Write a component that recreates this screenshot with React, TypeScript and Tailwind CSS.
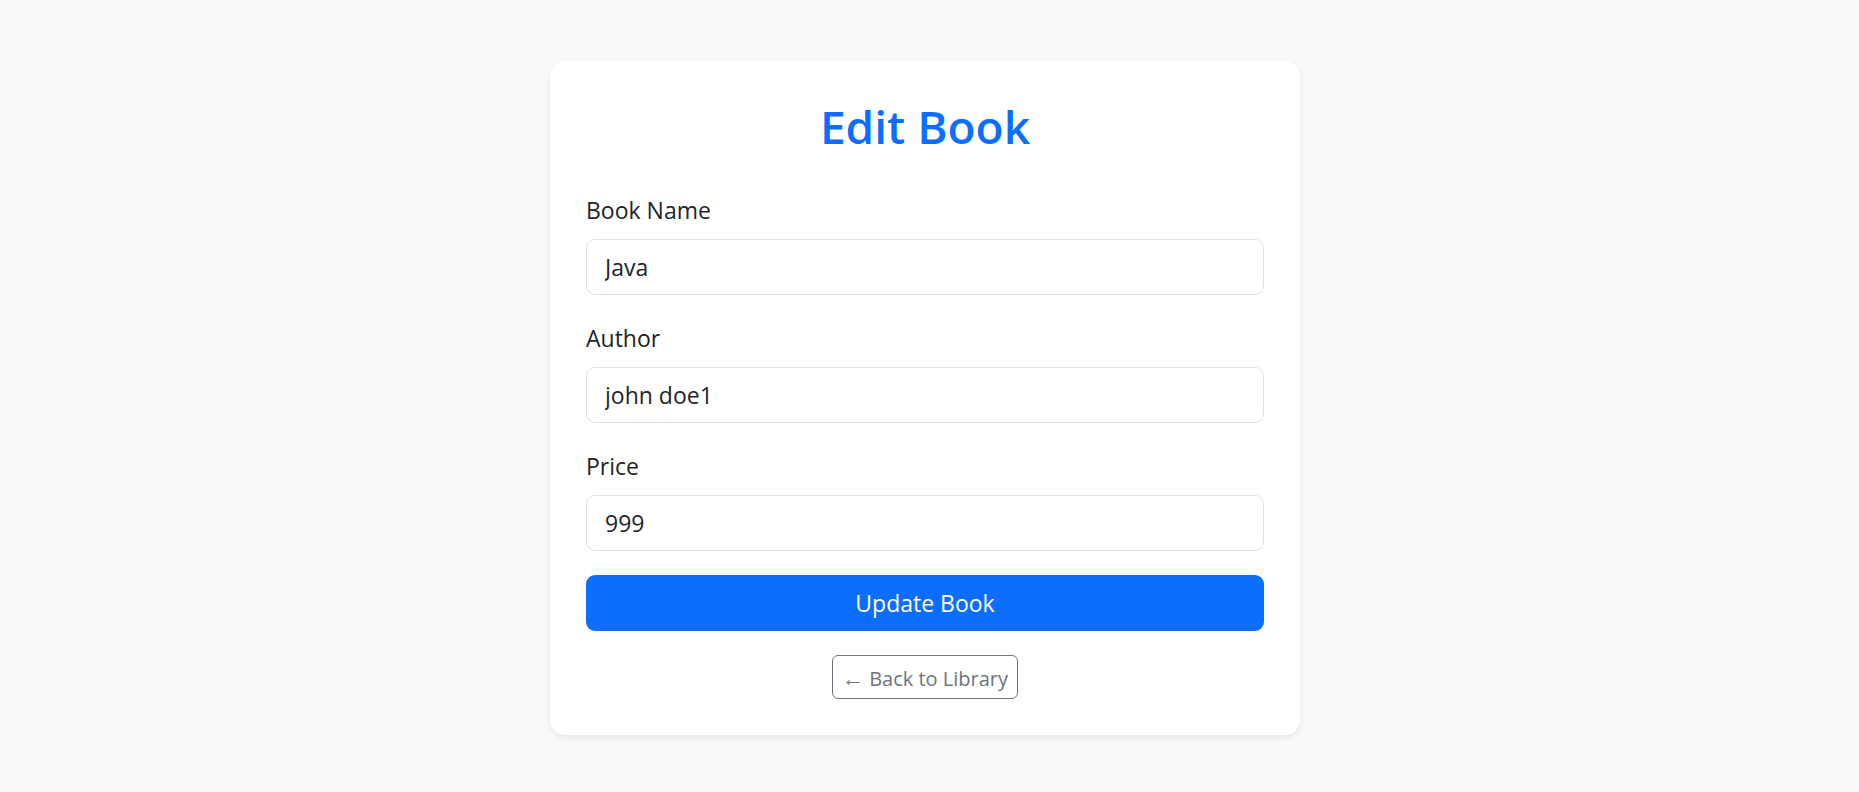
import React, { useState } from 'react';

const font = { fontFamily: '"Open Sans", "Noto Sans", "Liberation Sans", sans-serif' };

interface FieldProps {
  label: string;
  value: string;
  onChange: (v: string) => void;
}

function Field({ label, value, onChange }: FieldProps) {
  return (
    <div className="mb-[24px]">
      <label className="block mb-[12px] pt-[2px] text-[23px] leading-[34px] text-[#212529]">{label}</label>
      <input
        value={value}
        onChange={(e) => onChange(e.target.value)}
        className="block w-full h-[56px] px-[18px] text-[23px] text-[#212529] bg-white border border-[#dee2e6] rounded-[9px] outline-none"
      />
    </div>
  );
}

export default function App() {
  const [name, setName] = useState('Java');
  const [author, setAuthor] = useState('john doe1');
  const [price, setPrice] = useState('999');

  return (
    <div className="min-h-screen bg-[#f8f9fa] flex justify-center pt-[61px] pb-[56px] pr-[9px]" style={font}>
      <div className="w-[750px] self-start bg-white rounded-[15px] shadow-[0_3px_6px_rgba(0,0,0,0.075)] p-[36px]">
        {/* Title */}
        <h2 className="text-center text-[46px] leading-[58px] font-semibold text-[#0d6efd] mb-[36px]">Edit Book</h2>

        <Field label="Book Name" value={name} onChange={setName} />
        <Field label="Author" value={author} onChange={setAuthor} />
        <Field label="Price" value={price} onChange={setPrice} />

        <button className="w-full h-[56px] bg-[#0d6efd] text-white text-[23px] rounded-[9px]">Update Book</button>

        <div className="mt-[24px] flex justify-center">
          <button className="h-[44px] px-[9px] border border-[#6c757d] rounded-[6px] text-[20px] text-[#6c757d]">
            <span className="text-[22px]">←</span> Back to Library
          </button>
        </div>
      </div>
    </div>
  );
}
